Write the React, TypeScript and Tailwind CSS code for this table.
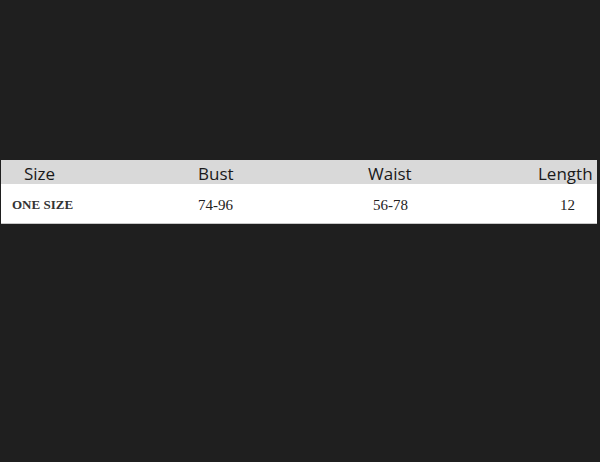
export default function App() {
  const head = "text-[17px] leading-none text-[#1a1a1a]";
  const serif = { fontFamily: '"Liberation Serif", "Times New Roman", serif' };

  return (
    <div className="w-[600px] h-[462px] bg-[#1f1f1f] pt-[160px] pl-px pr-[3px]">
      <div className="w-full">
        <div
          className="grid grid-cols-[197px_170px_170px_1fr] h-[24px] items-center pt-[2px] bg-[#d9d9d9]"
          style={{ fontFamily: '"Open Sans", "Noto Sans", sans-serif' }}
        >
          <span className={`${head} pl-[23px]`}>Size</span>
          <span className={head}>Bust</span>
          <span className={head}>Waist</span>
          <span className={head}>Length</span>
        </div>
        <div
          className="grid grid-cols-[197px_170px_170px_1fr] h-[40px] items-center pt-[3px] bg-white border-b border-[#c8c8c8] text-[#222]"
          style={serif}
        >
          <span className="pl-[11px] text-[13px] font-bold text-[#333]">ONE SIZE</span>
          <span className="text-[15px]">74-96</span>
          <span className="pl-[5px] text-[15px]">56-78</span>
          <span className="pl-[22px] text-[15px]">12</span>
        </div>
      </div>
    </div>
  );
}
